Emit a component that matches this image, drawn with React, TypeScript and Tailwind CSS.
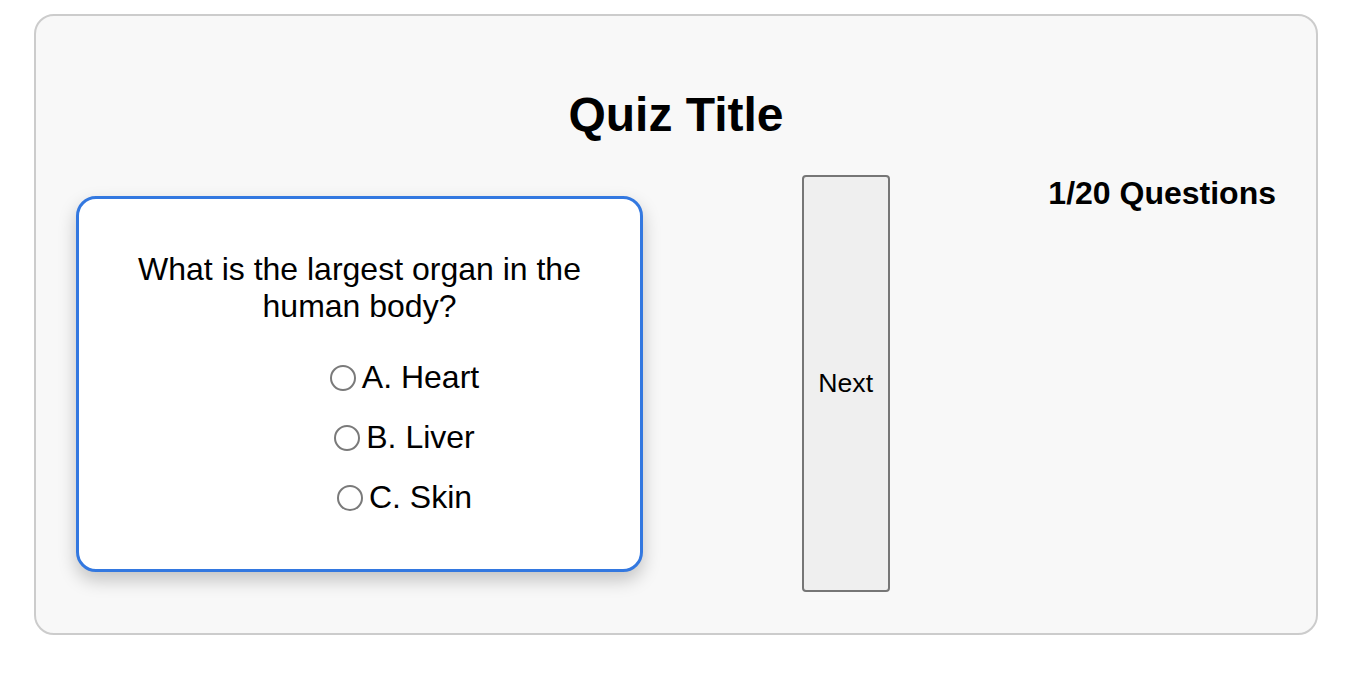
import React from 'react'

const options = ['A. Heart', 'B. Liver', 'C. Skin']

function Radio() {
  return (
    <span className="inline-block mt-[6px] ml-[10px] mr-[6px] w-[26px] h-[26px] shrink-0 rounded-full border-2 border-[#7a7a7a] bg-white" />
  )
}

export default function App() {
  return (
    <div className="w-[1358px] h-[674px] bg-white pt-[14px] pl-[34px] font-['Liberation_Sans',Arial,sans-serif] text-black">
      <div className="w-[1284px] h-[621px] rounded-[20px] border-2 border-[#cccccc] bg-[#f8f8f8] px-[40px] pt-[40px]">
        {/* Title */}
        <h2 className="mt-[31px] mb-[33px] text-center text-[48px] leading-[55px] font-bold">Quiz Title</h2>

        <div className="flex h-[417px] justify-between items-stretch">
          {/* Question card */}
          <div className="mt-[21px] mb-[20px] w-[567px] rounded-[20px] border-[3.5px] border-[#3378e0] bg-white px-[20px] pt-[52px] shadow-[0_8px_18px_rgba(0,0,0,0.22)]">
            <p className="text-center text-[32px] leading-[1.15]">What is the largest organ in the human body?</p>
            <div className="mt-[34px] pl-[80px] flex flex-col items-center gap-[23px]">
              {options.map((o) => (
                <label key={o} className="flex items-start text-[32px] leading-[37px]">
                  <Radio />
                  <span>{o}</span>
                </label>
              ))}
            </div>
          </div>

          {/* Next button */}
          <button className="w-[88px] rounded-[4px] border-2 border-[#767676] bg-[#efefef] px-[12px] text-[26.67px] leading-[1.15]">
            Next
          </button>

          {/* Progress */}
          <div className="self-start mt-[2px] text-[32px] leading-[32px] font-bold">1/20 Questions</div>
        </div>
      </div>
    </div>
  )
}
